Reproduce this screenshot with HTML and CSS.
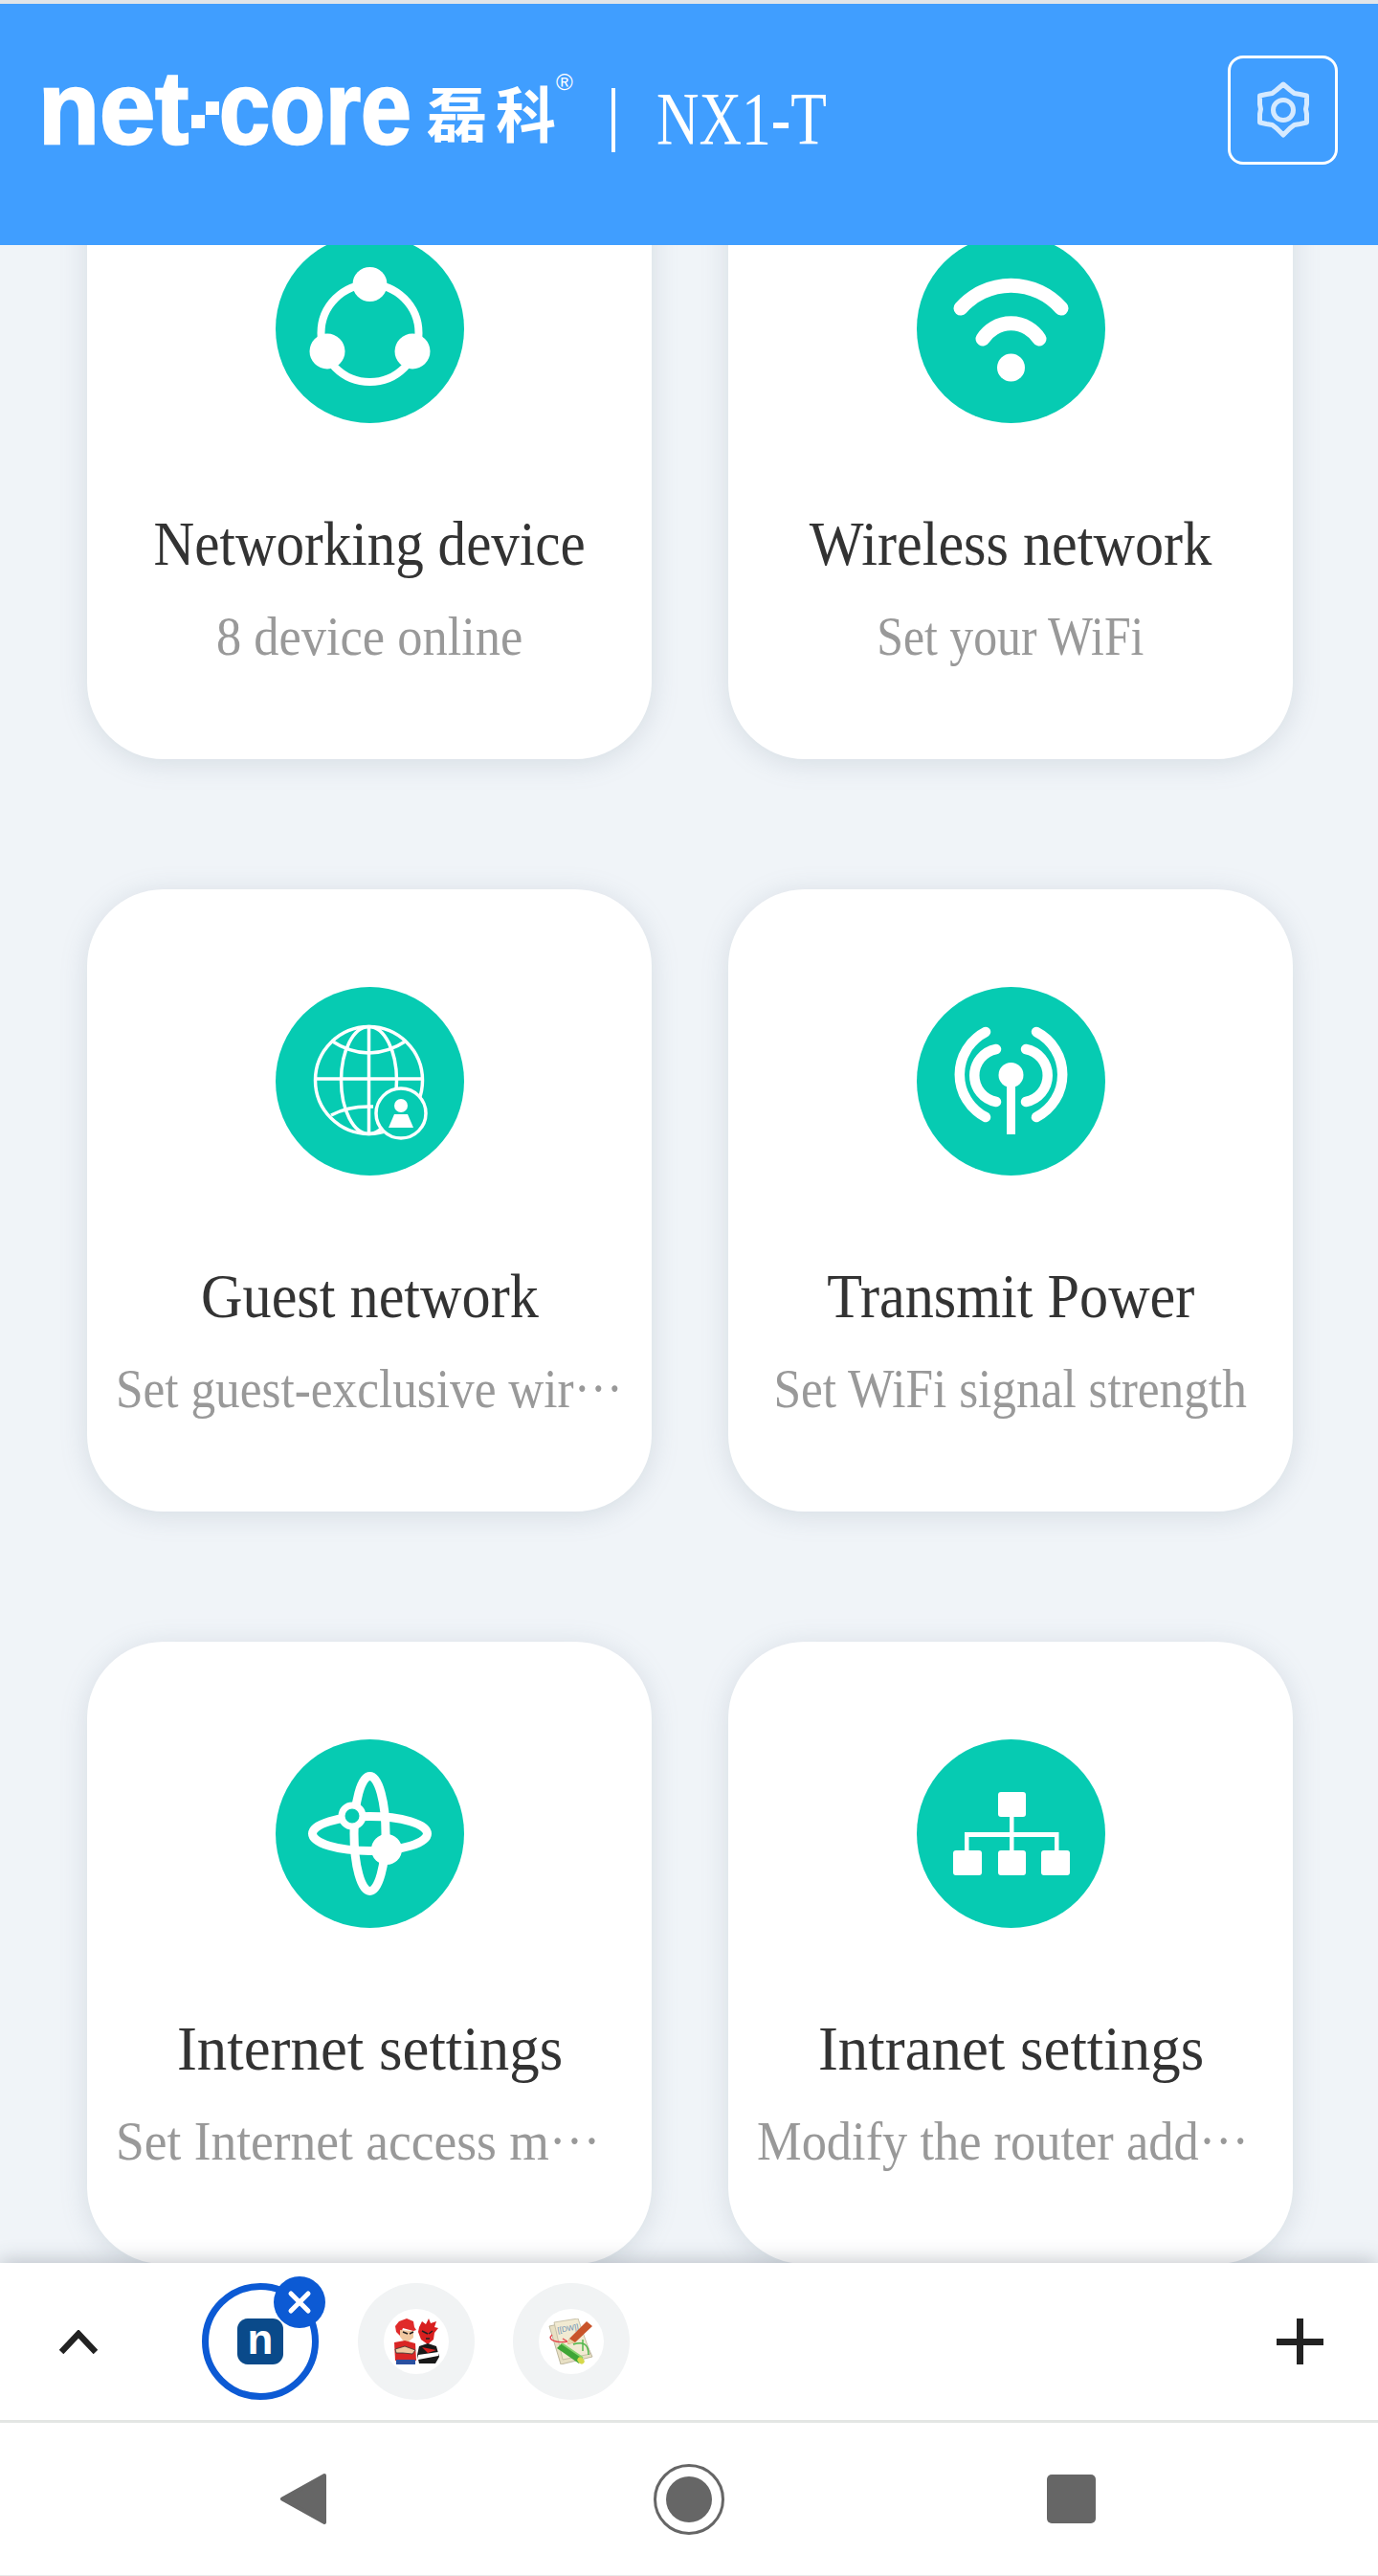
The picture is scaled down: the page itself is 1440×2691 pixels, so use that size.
FILE: index.html
```html
<!DOCTYPE html>
<html lang="en">
<head>
    <meta charset="UTF-8">
    <meta name="viewport" content="width=device-width, initial-scale=1.0">
    <title>Netcore NX1-T</title>
    <link rel="stylesheet" href="styles.css">
</head>
<body>
    <div class="top-strip"></div>
    <header class="header">
        <div class="brand">
            <span class="word word-net">net</span>
            <span class="mark"><i></i><i></i></span>
            <span class="word word-core">core</span>
            <span class="brand-cn"><span>磊</span><span>科</span></span>
            <span class="reg">®</span>
            <span class="divider"></span>
            <span class="model">NX1-T</span>
        </div>
        <button class="settings" aria-label="Settings">
            <svg width="58" height="62" viewBox="0 0 58 62" fill="none" stroke="#d6eaff" stroke-width="5" stroke-linejoin="round">
                <path d="M29 4l7 6 4.500 3.500 6 1 7 1.500v9l-1 5 1 5v9l-7 1.500-6 1-4.500 3.500-7 7-7-7-4.500-3.500-6-1-7-1.500v-9l1-5-1-5v-9l7-1.500 6-1 4.500-3.500z"/>
                <circle cx="29" cy="31" r="10.500"/>
            </svg>
        </button>
    </header>

    <main class="content">
        <div class="grid">
            <section class="card">
                <svg class="card-icon" viewBox="0 0 197 197">
                    <circle cx="98.500" cy="98.500" r="98.500" fill="#06cbb2"/>
                    <circle cx="98.500" cy="103" r="51" fill="none" stroke="#fff" stroke-width="8"/>
                    <circle cx="98.500" cy="52" r="18" fill="#fff"/>
                    <circle cx="54" cy="122" r="18.500" fill="#fff"/>
                    <circle cx="143" cy="122" r="18.500" fill="#fff"/>
                </svg>
                <h2 class="card-title"><span class="sx-909">Networking device</span></h2>
                <p class="card-sub"><span class="sx-920">8 device online</span></p>
            </section>
            <section class="card">
                <svg class="card-icon" viewBox="0 0 197 197">
                    <circle cx="98.500" cy="98.500" r="98.500" fill="#06cbb2"/>
                    <g fill="none" stroke="#fff" stroke-width="15" stroke-linecap="round">
                        <path d="M46 77A70 70 0 0 1 151 77"/>
                        <path d="M69 109A35 35 0 0 1 128 109"/>
                    </g>
                    <circle cx="98.500" cy="139" r="14.500" fill="#fff"/>
                </svg>
                <h2 class="card-title"><span>Wireless network</span></h2>
                <p class="card-sub"><span class="sx-873">Set your WiFi</span></p>
            </section>
            <section class="card">
                <svg class="card-icon" viewBox="0 0 197 197">
                    <circle cx="98.500" cy="98.500" r="98.500" fill="#06cbb2"/>
                    <g fill="none" stroke="#fff" stroke-width="3.500">
                        <circle cx="97.500" cy="97.500" r="56"/>
                        <ellipse cx="97.500" cy="97.500" rx="29" ry="56"/>
                        <path d="M97.500 41V153M41 96H154"/>
                        <path d="M58 56Q97.500 82 137 56"/>
                        <path d="M58 134Q76 124 102 125"/>
                    </g>
                    <circle cx="131" cy="132" r="26" fill="#06cbb2" stroke="#fff" stroke-width="3.500"/>
                    <circle cx="131" cy="124" r="7" fill="#fff"/>
                    <path d="M124 133H138L144 147H118Z" fill="#fff"/>
                </svg>
                <h2 class="card-title"><span>Guest network</span></h2>
                <p class="card-sub card-sub-clip"><span>Set guest-exclusive wir···</span></p>
            </section>
            <section class="card">
                <svg class="card-icon" viewBox="0 0 197 197">
                    <circle cx="98.500" cy="98.500" r="98.500" fill="#06cbb2"/>
                    <g fill="none" stroke="#fff" stroke-width="10.500" stroke-linecap="round">
                        <path d="M72 47A50 50 0 0 0 72 136"/>
                        <path d="M125 47A50 50 0 0 1 125 136"/>
                        <path d="M83 65A28 28 0 0 0 83 120"/>
                        <path d="M114 65A28 28 0 0 1 114 120"/>
                    </g>
                    <circle cx="98.500" cy="92" r="13" fill="#fff"/>
                    <rect x="94" y="92" width="9" height="62" fill="#fff"/>
                </svg>
                <h2 class="card-title"><span>Transmit Power</span></h2>
                <p class="card-sub"><span>Set WiFi signal strength</span></p>
            </section>
            <section class="card">
                <svg class="card-icon" viewBox="0 0 197 197">
                    <circle cx="98.500" cy="98.500" r="98.500" fill="#06cbb2"/>
                    <g fill="none" stroke="#fff" stroke-width="9">
                        <ellipse cx="98.500" cy="98.500" rx="60" ry="18"/>
                        <ellipse cx="98.500" cy="98.500" rx="16.500" ry="60"/>
                    </g>
                    <circle cx="80" cy="80" r="11" fill="#06cbb2" stroke="#fff" stroke-width="7"/>
                    <circle cx="116" cy="115" r="16" fill="#fff"/>
                </svg>
                <h2 class="card-title"><span class="sx-967">Internet settings</span></h2>
                <p class="card-sub card-sub-clip"><span class="sx-938">Set Internet access m···</span></p>
            </section>
            <section class="card">
                <svg class="card-icon" viewBox="0 0 197 197">
                    <circle cx="98.500" cy="98.500" r="98.500" fill="#06cbb2"/>
                    <g fill="#fff">
                        <rect x="85" y="55" width="29" height="26" rx="3"/>
                        <rect x="38" y="116" width="30" height="26" rx="3"/>
                        <rect x="85" y="116" width="29" height="26" rx="3"/>
                        <rect x="130" y="116" width="30" height="26" rx="3"/>
                        <rect x="97" y="80" width="4.500" height="37"/>
                        <rect x="50" y="97" width="98" height="5"/>
                        <rect x="50" y="97" width="4.500" height="20"/>
                        <rect x="144" y="97" width="4.500" height="20"/>
                    </g>
                </svg>
                <h2 class="card-title"><span class="sx-967">Intranet settings</span></h2>
                <p class="card-sub card-sub-clip"><span class="sx-920">Modify the router add···</span></p>
            </section>
        </div>
    </main>

    <div class="tabbar">
        <svg class="chevron" width="40" height="25" viewBox="0 0 40 25" fill="none" stroke="#222" stroke-width="6.500">
            <path d="M2 23L20 4L38 23"/>
        </svg>
        <div class="tabs">
            <div class="tab tab-active">
                <span class="favicon-n">n</span>
                <span class="tab-close">
                    <svg width="26" height="26" viewBox="0 0 26 26" stroke="#fff" stroke-width="5" stroke-linecap="round">
                        <path d="M4 4L22 22M22 4L4 22"/>
                    </svg>
                </span>
            </div>
            <div class="tab">
                <span class="favicon-wrap">
                    <svg width="48" height="48" viewBox="0 0 48 48">
                        <path d="M2 8L6 3L14 0L21 3L22 9L24 12L21 13L10 10L7 18L3 14Z" fill="#e02a2a"/>
                        <path d="M7 12L21 13L21 20L16 24H11L7 19Z" fill="#f0c8a0"/>
                        <path d="M10 14L15 16M17 16L21 14" stroke="#222" stroke-width="1.500"/>
                        <path d="M1 25L12 23L23 26L24 44H2Z" fill="#d92525"/>
                        <path d="M2 32L12 29L23 33L20 37L10 36L3 36Z" fill="#f0c8a0" stroke="#333" stroke-width="0.800"/>
                        <rect x="3" y="43" width="20" height="5" fill="#2a4fa0"/>
                        <path d="M27 9L30 3L34 6L37 0L39 5L45 3L43 9L47 10L43 15L42 22L36 27L29 22L26 14Z" fill="#d81f1f"/>
                        <path d="M30 13L36 16M41 13L37 16M34 21H38" stroke="#222" stroke-width="1.500"/>
                        <path d="M27 29L36 26L45 29L48 40L44 47H27L25 38Z" fill="#191919"/>
                        <path d="M26 38L47 35L47 39L26 43Z" fill="#fff"/>
                        <path d="M30 30L45 33L36 36Z" fill="#d81f1f"/>
                    </svg>
                </span>
            </div>
            <div class="tab">
                <span class="favicon-wrap">
                    <svg width="48" height="48" viewBox="0 0 48 48">
                        <path d="M1 8L29 2L46 40L13 48Z" fill="#e8e0c4" stroke="#b0a98f" stroke-width="0.800"/>
                        <path d="M6 4L31 0L44 37L15 43Z" fill="#f1ead2" stroke="#bdb69c" stroke-width="0.800"/>
                        <text x="10" y="15" class="dw-text" transform="rotate(-10 10 15)">[[DW]]</text>
                        <path d="M22 21L40 3L46 8L28 25L20 27Z" fill="#c9542a"/>
                        <path d="M22 21L20 27L28 25Z" fill="#e9d5a8"/>
                        <path d="M9 31L14 26L36 41L32 47Z" fill="#3ea536"/>
                        <path d="M14 26L36 41" stroke="#86d46e" stroke-width="2"/>
                        <ellipse cx="34" cy="44" rx="3" ry="4" fill="#d6d84a" transform="rotate(-50 34 44)"/>
                        <path d="M20 24C8 26 -2 22 4 17M20 24l-5-3" fill="none" stroke="#e5484d" stroke-width="1.400"/>
                        <path d="M26 27C36 24 42 26 42 38M36 22V34" fill="none" stroke="#4cb648" stroke-width="1.400"/>
                    </svg>
                </span>
            </div>
        </div>
        <svg class="plus" width="49" height="48" viewBox="0 0 49 48" fill="#222">
            <rect x="21" width="7" height="48"/>
            <rect y="21" width="49" height="7"/>
        </svg>
    </div>

    <nav class="navbar">
        <svg class="nav-back" width="48" height="55" viewBox="0 0 48 55" fill="#666" stroke="#666" stroke-width="4" stroke-linejoin="round">
            <path d="M46 3L2 27.500L46 52Z"/>
        </svg>
        <span class="nav-home"><span></span></span>
        <span class="nav-square"></span>
    </nav>
</body>
</html>
```
FILE: styles.css
```css
* {
    box-sizing: border-box;
}
html, body {
    margin: 0;
    padding: 0;
}
body {
    width: 1440px;
    height: 2691px;
    display: flex;
    flex-direction: column;
    overflow: hidden;
    background-color: #f0f4f8;
    font-family: "Liberation Serif", "Noto Sans CJK SC", serif;
}
.top-strip {
    height: 4px;
    background-color: #e1e5e9;
}
.header {
    height: 252px;
    display: flex;
    align-items: center;
    padding: 0 42px 30px 40px;
    background-color: #409eff;
    color: #fff;
    flex-shrink: 0;
    position: relative;
    z-index: 2;
}
.brand {
    display: flex;
    align-items: baseline;
    position: relative;
    top: -2px;
}
.word {
    font-family: "Liberation Sans", sans-serif;
    font-size: 108px;
    font-weight: 700;
    line-height: 1;
    transform-origin: left bottom;
    -webkit-text-stroke: 2.5px #fff;
}
.word-net {
    width: 160px;
    transform: scaleX(.97);
}
.word-core {
    width: 200px;
    transform: scaleX(.88);
}
.mark {
    width: 29px;
    height: 28px;
    position: relative;
    top: -30px;
    display: inline-flex;
    flex-wrap: wrap;
    flex-direction: row-reverse;
}
.mark i {
    width: 14px;
    height: 14px;
    background-color: #fff;
}
.mark i:last-child {
    margin-right: 15px;
}
.brand-cn {
    margin-left: 17px;
    display: flex;
    gap: 9px;
    position: relative;
    top: -7px;
    font-family: "Noto Sans CJK SC", sans-serif;
    font-size: 63px;
    font-weight: 700;
    line-height: 1;
}
.reg {
    width: 24px;
    font-family: "Liberation Sans", sans-serif;
    font-size: 24px;
    line-height: 1;
    position: relative;
    top: -56px;
}
.divider {
    width: 4px;
    height: 67px;
    margin: 0 0 -24px 34px;
    position: relative;
    top: 9px;
    background-color: #fff;
}
.model {
    margin-left: 43px;
    font-size: 78px;
    line-height: 1;
    transform: scaleX(.79);
    transform-origin: left bottom;
}
.settings {
    width: 115px;
    height: 114px;
    margin-left: auto;
    padding: 0;
    display: flex;
    align-items: center;
    justify-content: center;
    background: none;
    border: 3px solid #fff;
    border-radius: 16px;
}
.content {
    flex: 1;
    overflow: hidden;
}
.grid {
    display: grid;
    grid-template-columns: 590px 590px;
    grid-auto-rows: 650px;
    column-gap: 80px;
    row-gap: 136px;
    margin-top: -113px;
    padding-left: 91px;
}
.card {
    padding-top: 102px;
    display: flex;
    flex-direction: column;
    align-items: center;
    background-color: #fff;
    border-radius: 80px;
    box-shadow: 0 4px 28px rgba(120, 135, 155, .22);
    text-align: center;
}
.card-icon {
    width: 197px;
    height: 197px;
    display: block;
    flex-shrink: 0;
}
.card-title {
    margin: 81px 0 0;
    font-size: 65px;
    font-weight: 400;
    line-height: 90px;
    color: #333;
    white-space: nowrap;
}
.card-title span {
    display: inline-block;
    transform: scaleX(.926);
}
.card-sub {
    margin: 12px 0 0;
    font-size: 57px;
    line-height: 80px;
    color: #999;
    white-space: nowrap;
}
.card-sub span {
    display: inline-block;
    transform: scaleX(.9);
}
.card-sub-clip {
    width: 530px;
    text-align: left;
}
.card-sub-clip span {
    transform-origin: left center;
}
/* per-label width fit, the screenshot's font runs a bit different */
.card-title .sx-909 {
    transform: scaleX(.909);
}
.card-title .sx-967 {
    transform: scaleX(.967);
}
.card-sub .sx-873 {
    transform: scaleX(.873);
}
.card-sub .sx-920 {
    transform: scaleX(.92);
}
.card-sub .sx-938 {
    transform: scaleX(.938);
}
.tabbar {
    height: 164px;
    display: flex;
    align-items: center;
    padding: 0 57px 0 62px;
    background-color: #fff;
    flex-shrink: 0;
    position: relative;
    z-index: 1;
    box-shadow: 0 -2px 20px rgba(60, 70, 85, .3);
}
.tabs {
    display: flex;
    gap: 40.500px;
    margin-left: 109px;
}
.tab {
    width: 122px;
    height: 122px;
    position: relative;
    display: flex;
    align-items: center;
    justify-content: center;
    border-radius: 50%;
    background-color: #f1f3f4;
}
.tab-active {
    background-color: #fff;
    border: 7px solid #0c5ad4;
}
.favicon-n {
    width: 48px;
    height: 48px;
    border-radius: 11px;
    background-color: #0a4a8a;
    color: #fff;
    font-family: "Liberation Sans", sans-serif;
    font-size: 44px;
    font-weight: 700;
    line-height: 44px;
    text-align: center;
}
.favicon-wrap {
    width: 68px;
    height: 68px;
    display: flex;
    align-items: center;
    justify-content: center;
    border-radius: 50%;
    background-color: #fff;
}
.dw-text {
    font-family: "Liberation Sans", sans-serif;
    font-size: 8px;
    fill: #6f93b5;
}
.tab-close {
    width: 54px;
    height: 54px;
    position: absolute;
    top: -14px;
    right: -14px;
    display: flex;
    align-items: center;
    justify-content: center;
    border-radius: 50%;
    background-color: #0c5ad4;
}
.plus {
    margin-left: auto;
}
.navbar {
    height: 163px;
    display: flex;
    align-items: center;
    padding-left: 293px;
    background-color: #fff;
    border-top: 3px solid #e3e6e4;
    border-bottom: 1px solid #e8eaea;
    flex-shrink: 0;
    position: relative;
    z-index: 1;
}
.nav-home {
    width: 74px;
    height: 74px;
    margin: 0 337px 0 342px;
    display: flex;
    align-items: center;
    justify-content: center;
    border: 3px solid #666;
    border-radius: 50%;
}
.nav-home span {
    width: 48px;
    height: 48px;
    border-radius: 50%;
    background-color: #666;
}
.nav-square {
    width: 51px;
    height: 51px;
    border-radius: 5px;
    background-color: #666;
}
```
